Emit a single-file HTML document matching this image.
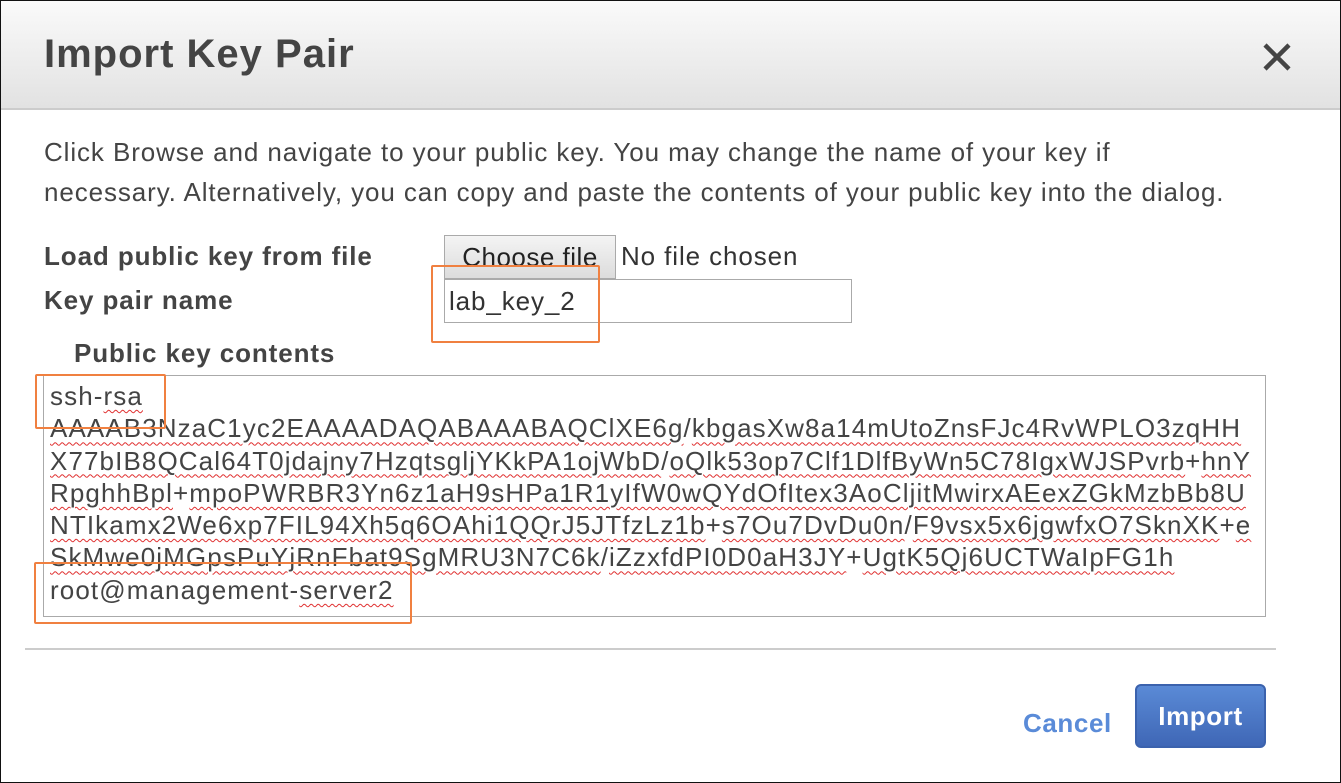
<!DOCTYPE html>
<html><head><style>
body{margin:0;width:1341px;height:783px;overflow:hidden;background:#fff;font-family:"Liberation Sans",sans-serif;color:#444;position:relative}
.frame{position:absolute;left:0;top:0;width:1339px;height:781px;border:1px solid #111}
.hdr{position:absolute;left:1px;top:1px;width:1339px;height:107px;background:linear-gradient(#fafafa,#e2e2e2);border-bottom:2px solid #ccc}
.a{position:absolute;white-space:nowrap}
.sq{text-decoration:underline wavy #e03030;text-decoration-thickness:1px;text-underline-offset:4px}
.or{position:absolute;border:2px solid #f08040;border-radius:2px}
</style></head><body>
<div class="frame"></div>
<div class="hdr"></div>
<div class="a" style="left:44px;top:32px;font-size:40px;letter-spacing:1px;font-weight:bold;color:#444">Import Key Pair</div>
<svg class="a" style="left:1262px;top:42px" width="30" height="30"><path d="M3 3L27 27M27 3L3 27" stroke="#444" stroke-width="4.5"/></svg>
<div class="a" style="left:44px;top:132px;font-size:26px;letter-spacing:0.9px;line-height:40px;color:#444">Click Browse and navigate to your public key. You may change the name of your key if<br>necessary. Alternatively, you can copy and paste the contents of your public key into the dialog.</div>
<div class="a" style="left:44px;top:241px;font-size:26px;letter-spacing:0.9px;font-weight:bold">Load public key from file</div>
<div class="a" style="left:44px;top:285px;font-size:26px;letter-spacing:0.9px;font-weight:bold">Key pair name</div>
<div class="a" style="left:74px;top:338px;font-size:26px;letter-spacing:0.9px;font-weight:bold">Public key contents</div>
<div class="a" style="left:444px;top:235px;width:170px;height:42px;border:1px solid #aaa;background:linear-gradient(#f4f4f4,#dcdcdc);font-size:26px;letter-spacing:0.5px;color:#222;text-align:center;line-height:42px">Choose file</div>
<div class="a" style="left:621px;top:241px;font-size:26px;letter-spacing:0.9px;color:#333">No file chosen</div>
<div class="a" style="left:444px;top:279px;width:402px;height:42px;border:1px solid #aaa;font-size:26px;letter-spacing:0.9px;color:#333;line-height:42px;padding-left:4px">lab_key_2</div>
<div class="a" style="left:43px;top:375px;width:1221px;height:240px;border:1px solid #aaa"></div>
<div class="a" style="left:50px;top:380px;font-size:26px;letter-spacing:1.1px;line-height:32.3px;color:#444">
ssh-<span class="sq">rsa</span><br>
<span class="sq">AAAAB3NzaC1yc2EAAAADAQABAAABAQClXE6g</span>/<span class="sq">kbgasXw8a14mUtoZnsFJc4RvWPLO3zqHH</span><br>
<span class="sq">X77bIB8QCal64T0jdajny7HzqtsgljYKkPA1ojWbD</span>/<span class="sq">oQlk53op7Clf1DlfByWn5C78IgxWJSPvrb</span>+<span class="sq">hnY</span><br>
<span class="sq">RpghhBpl</span>+<span class="sq">mpoPWRBR3Yn6z1aH9sHPa1R1yIfW0wQYdOfItex3AoCljitMwirxAEexZGkMzbBb8U</span><br>
<span class="sq">NTIkamx2We6xp7FIL94Xh5q6OAhi1QQrJ5JTfzLz1b</span>+<span class="sq">s7Ou7DvDu0n</span>/<span class="sq">F9vsx5x6jgwfxO7SknXK</span>+<span class="sq">e</span><br>
<span class="sq">SkMwe0jMGpsPuYjRnFbat9SgMRU3N7C6k</span>/<span class="sq">iZzxfdPI0D0aH3JY</span>+<span class="sq">UgtK5Qj6UCTWaIpFG1h</span><br>
root@management-<span class="sq">server2</span></div>
<div class="or" style="left:431px;top:265px;width:165px;height:74px"></div>
<div class="or" style="left:35px;top:374px;width:127px;height:51px"></div>
<div class="or" style="left:34px;top:562px;width:374px;height:58px"></div>
<div class="a" style="left:25px;top:648px;width:1251px;height:2px;background:#ccc"></div>
<div class="a" style="left:1023px;top:708px;font-size:26px;letter-spacing:0.6px;font-weight:bold;color:#5a8bd8">Cancel</div>
<div class="a" style="left:1135px;top:684px;border:2px solid #3b62ad;border-radius:6px;background:linear-gradient(#5a8ad6,#3f67b6);color:#fff;font-size:26px;letter-spacing:0.6px;font-weight:bold;text-align:center;line-height:60px;box-sizing:border-box;width:131px;height:64px">Import</div>
</body></html>
